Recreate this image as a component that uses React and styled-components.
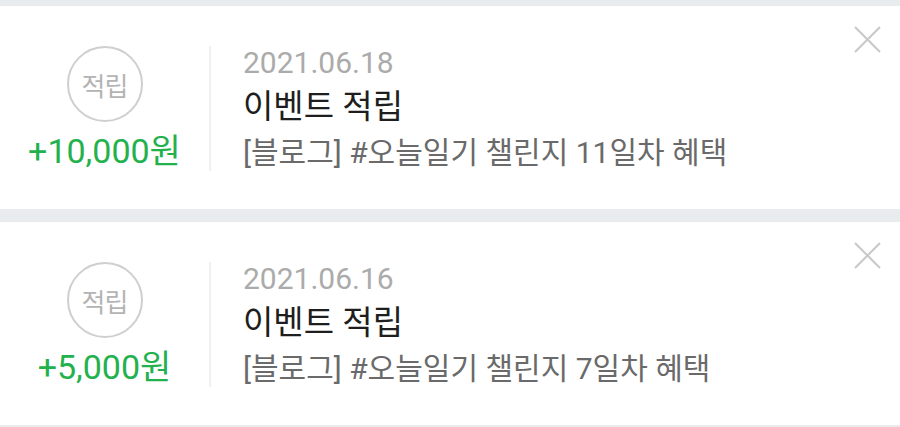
import React from 'react';
import styled, { createGlobalStyle } from 'styled-components';

const GlobalStyle = createGlobalStyle`
  html, body {
    margin: 0;
    padding: 0;
    background: #e9ecef;
  }
  body {
    font-family: Roboto, "Noto Sans CJK KR", sans-serif;
  }
`

const List = styled.div`
  padding-top: 6px;
  display: flex;
  flex-direction: column;
  gap: 13px;
  width: 900px;
  height: 427px;
  box-sizing: border-box;
`

const Card = styled.div`
  position: relative;
  background: #fff;
  height: 203px;
  box-sizing: border-box;
  padding-top: 40px;
  display: flex;
`

const Left = styled.div`
  width: 211px;
  height: 125px;
  border-right: 2px solid #f0f0f0;
  display: flex;
  flex-direction: column;
  align-items: center;
  box-sizing: border-box;
`

const Badge = styled.div`
  width: 76px;
  height: 76px;
  border-radius: 50%;
  border: 2px solid #cfcfcf;
  box-sizing: border-box;
  display: flex;
  align-items: center;
  justify-content: center;
  color: #b4b4b4;
  font-size: 26px;
  letter-spacing: -1px;
`

const Amount = styled.div`
  margin-top: 9px;
  line-height: 40px;
  font-size: 34px;
  color: #23b14d;
  white-space: nowrap;
`

const Body = styled.div`
  padding-left: 32px;
  display: flex;
  flex-direction: column;
`

const Date = styled.div`
  font-size: 30px;
  line-height: 34px;
  color: #ababab;
`

const Title = styled.div`
  font-size: 33px;
  line-height: 54px;
  color: #1e1e1e;
`

const Desc = styled.div`
  font-size: 30px;
  line-height: 38px;
  color: #6a6a6a;
  white-space: nowrap;
`

const Close = styled.button`
  position: absolute;
  top: 20px;
  right: 19px;
  width: 27px;
  height: 27px;
  padding: 0;
  border: 0;
  background: none;
  display: flex;
  align-items: center;
  justify-content: center;
`

const items = [
  { date: '2021.06.18', amount: '+10,000원', desc: '[블로그] #오늘일기 챌린지 11일차 혜택' },
  { date: '2021.06.16', amount: '+5,000원', desc: '[블로그] #오늘일기 챌린지 7일차 혜택' },
];

const CloseIcon = () => (
  <svg width="27" height="27" viewBox="0 0 27 27">
    <path d="M1 1 L26 26 M26 1 L1 26" stroke="#c8c8c8" strokeWidth="2" fill="none" />
  </svg>
);

export default function App() {
  return (
    <>
      <GlobalStyle />
      <List>
        {items.map(item => (
          <Card key={item.date}>
            <Left>
              <Badge>적립</Badge>
              <Amount>{item.amount}</Amount>
            </Left>
            <Body>
              <Date>{item.date}</Date>
              <Title>이벤트 적립</Title>
              <Desc>{item.desc}</Desc>
            </Body>
            <Close aria-label="삭제"><CloseIcon /></Close>
          </Card>
        ))}
      </List>
    </>
  );
}
